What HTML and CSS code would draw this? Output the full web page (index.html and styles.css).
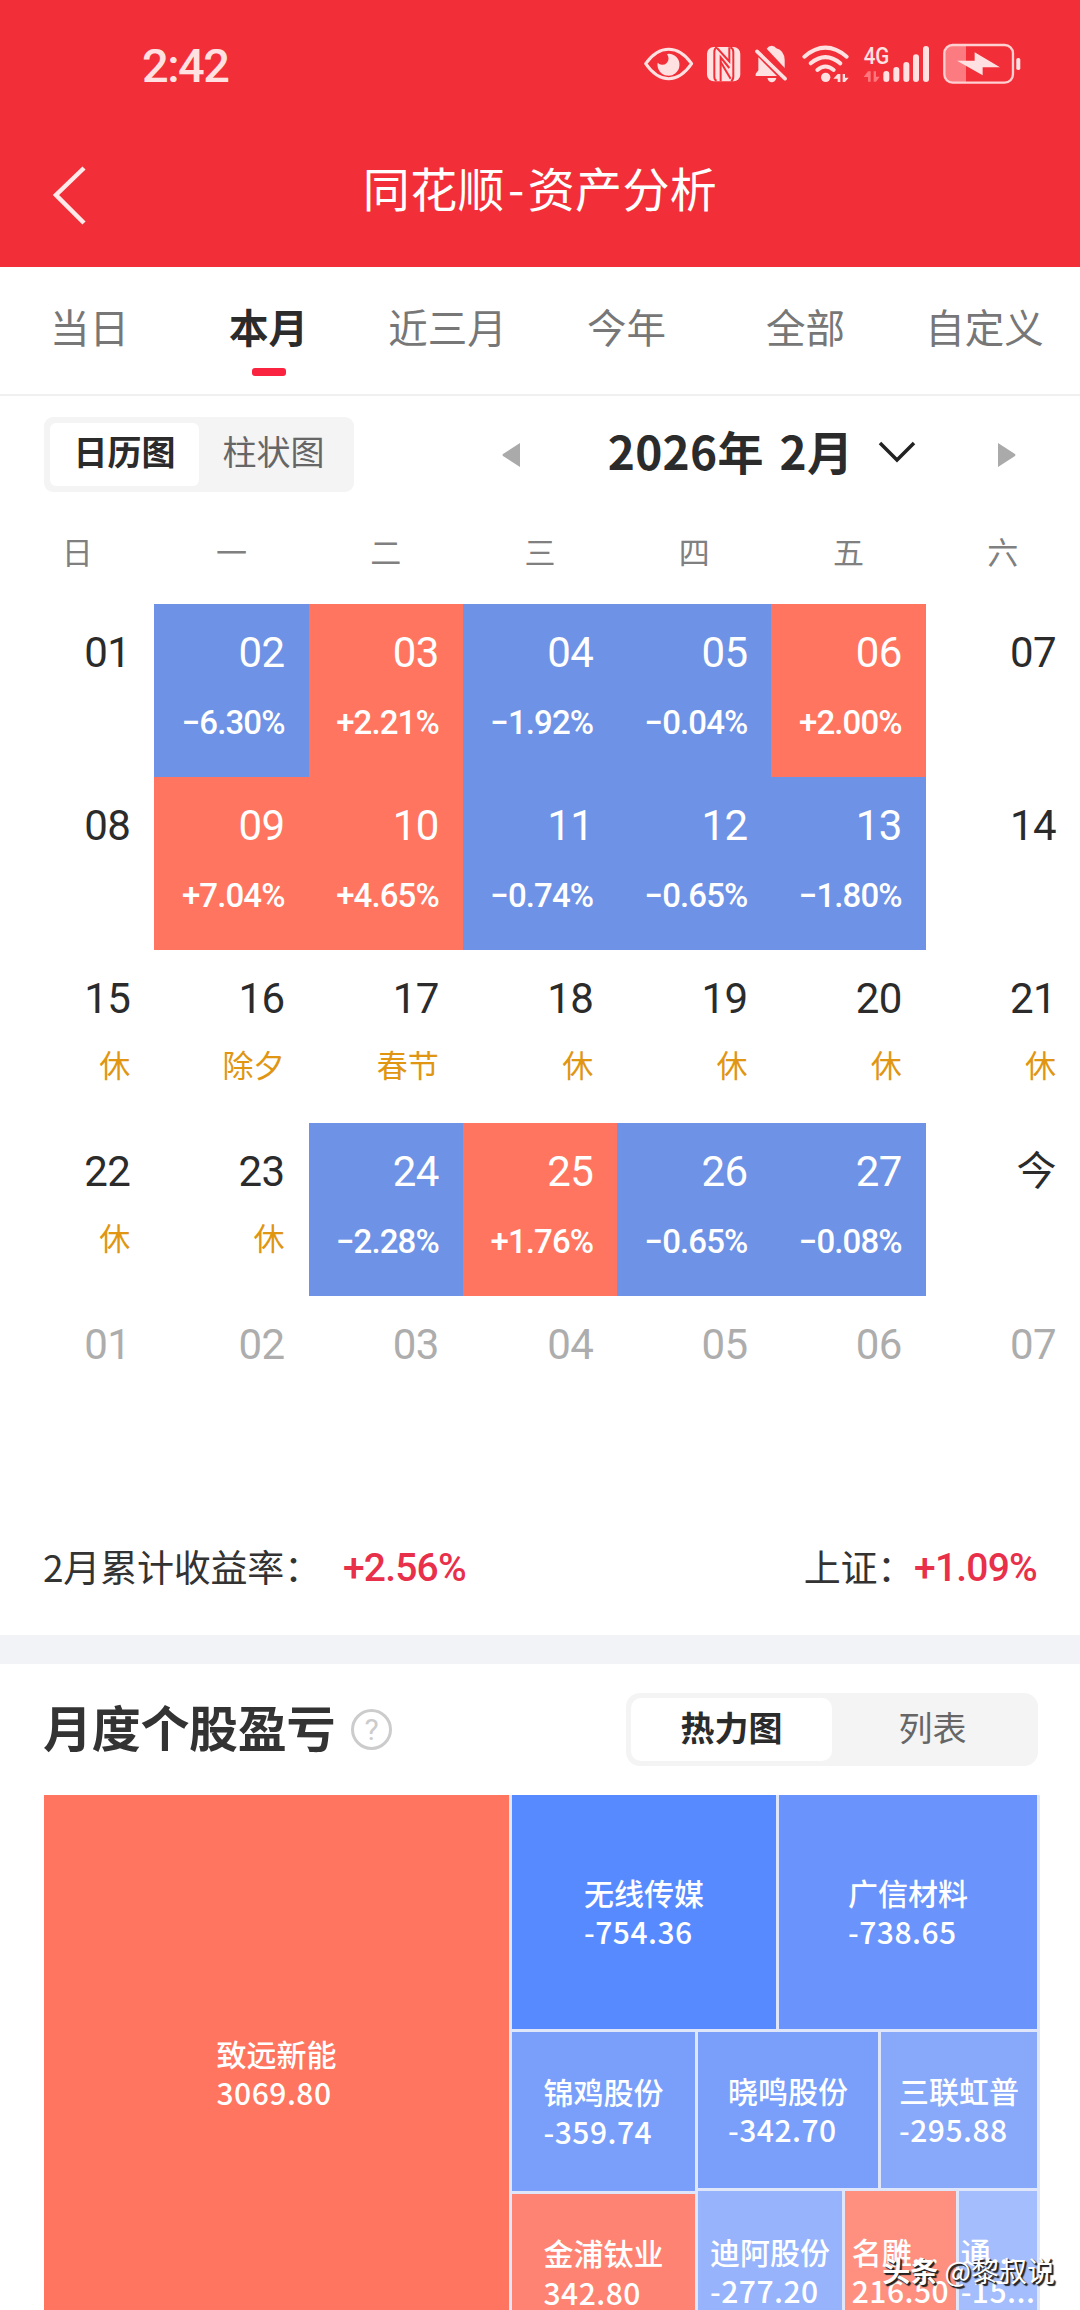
FILE: index.html
```html
<!DOCTYPE html>
<html lang="zh-CN">
  <head>
    <meta charset="UTF-8" />
    <meta name="viewport" content="width=device-width, initial-scale=1.0" />
    <title>同花顺-资产分析</title>
    <link rel="stylesheet" href="styles.css">
  </head>
  <body>
    <header class="header">
      <div class="status-bar">
        <span class="time">2:42</span>
        <div class="status-icons">
          <!-- eye -->
          <svg width="60" height="70" viewBox="60 0 180 210">
            <path d="M77 101 Q108 58 146 58 Q184 58 215 101 Q184 146 146 146 Q108 146 77 101Z" fill="none" stroke="#ffe1e2" stroke-width="9" stroke-linejoin="round" />
            <path d="M146 71 A33 33 0 1 1 113 98 A17 17 0 1 0 141 73Z" fill="#ffe1e2" />
          </svg>
          <!-- nfc -->
          <svg width="48.3" height="70" viewBox="240 0 145 210">
            <rect x="261" y="51" width="100" height="103" rx="20" fill="#ffe1e2" />
            <g fill="none" stroke="#f22f38" stroke-width="6">
              <path d="M290 152 Q283 150 283 140 V66 Q283 55 291 52" />
              <path d="M291 54 L328 94 V52" />
              <path d="M302 154 V82 L328 114" />
              <path d="M302 96 L332 146" />
              <path d="M331 52 Q340 55 340 66 V140 Q340 150 333 153" />
            </g>
          </svg>
          <!-- muted bell -->
          <svg width="46.7" height="70" viewBox="385 0 140 210">
            <path d="M441 56 Q447 47 456 47 Q465 47 470 55 Q494 62 495 90 V114Z" fill="#ffe1e2" />
            <path d="M416 82 L472 138 H408 V131 L416 121Z" fill="#ffe1e2" />
            <path d="M412 64 L496 146" stroke="#ffe1e2" stroke-width="11" stroke-linecap="round" />
            <path d="M443 144 H470 Q466 157 456 157 Q447 157 443 144Z" fill="#ffe1e2" />
          </svg>
          <!-- wifi -->
          <svg width="61.7" height="70" viewBox="525 0 185 210">
            <g fill="none" stroke="#ffe1e2" stroke-width="12" stroke-linecap="round">
              <path d="M553 80 Q616 26 680 80" />
              <path d="M572 100 Q616 63 661 100" />
              <path d="M592 120 Q616 99 641 120" />
            </g>
            <circle cx="617" cy="142" r="14" fill="#ffe1e2" />
            <path d="M640 146 L653 132 H661 V156 H653 V146Z M668 132 H675 V143 H686 L675 156 H668Z" fill="#ffe1e2" />
          </svg>
          <!-- mobile signal -->
          <svg width="80" height="70" viewBox="710 0 240 210">
            <text class="signal-text" x="730" y="101" textLength="77" lengthAdjust="spacingAndGlyphs">4G</text>
            <path d="M730 141 L743 124 H751 V155 H743 V141Z M760 124 H767 V140 H778 L767 155 H760Z" fill="#ff777c" />
            <g stroke="#ffe1e2" stroke-width="18" stroke-linecap="round">
              <path d="M798 132 V147" />
              <path d="M828 120 V147" />
              <path d="M858 105 V147" />
              <path d="M887 82 V147" />
              <path d="M917 57 V147" />
            </g>
          </svg>
          <!-- battery -->
          <svg width="93.3" height="70" viewBox="950 0 280 210">
            <path d="M1037 48 H995 Q974 48 974 72 V132 Q974 156 995 156 H1037Z" fill="#fb7b80" />
            <rect x="972" y="45" width="206" height="113" rx="25" fill="none" stroke="#ffd0d2" stroke-width="7" />
            <rect x="1188" y="84" width="12" height="36" rx="5" fill="#ffe1e2" />
            <path d="M1010 92 L1063 92 V67 L1139 112 L1087 112 V136Z" fill="#ffe1e2" />
          </svg>
        </div>
      </div>
      <div class="nav-bar">
        <svg class="back" width="40" height="64" viewBox="0 0 40 64">
          <path d="M34 5 L6 32 L34 60" fill="none" stroke="#ffe9e9" stroke-width="4.5" />
        </svg>
        <h1 class="nav-title">同花顺<span>-</span>资产分析</h1>
      </div>
    </header>

    <nav class="tabs">
      <span class="tab">当日</span>
      <span class="tab active">本月</span>
      <span class="tab">近三月</span>
      <span class="tab">今年</span>
      <span class="tab">全部</span>
      <span class="tab">自定义</span>
    </nav>

    <section class="toolbar">
      <div class="segment chart-segment">
        <span class="segment-item active">日历图</span>
        <span class="segment-item">柱状图</span>
      </div>
      <div class="month-picker">
        <svg width="20" height="26" viewBox="0 0 20 26">
          <path d="M19 1 V25 L2 14 Q1 13 2 12Z" fill="#aaa" />
        </svg>
        <div class="month">
          <span>2026年 2月</span>
          <svg width="38" height="24" viewBox="0 0 38 24">
            <path d="M2 3 L19 20 L36 3" fill="none" stroke="#222" stroke-width="3.5" />
          </svg>
        </div>
        <svg width="20" height="26" viewBox="0 0 20 26">
          <path d="M1 1 V25 L18 14 Q19 13 18 12Z" fill="#aaa" />
        </svg>
      </div>
    </section>

    <div class="weekdays">
      <span>日</span><span>一</span><span>二</span><span>三</span><span>四</span><span>五</span><span>六</span>
    </div>

    <section class="calendar">
      <div class="day"><b>01</b></div>
      <div class="day down"><b>02</b><span>−6.30%</span></div>
      <div class="day up"><b>03</b><span>+2.21%</span></div>
      <div class="day down"><b>04</b><span>−1.92%</span></div>
      <div class="day down"><b>05</b><span>−0.04%</span></div>
      <div class="day up"><b>06</b><span>+2.00%</span></div>
      <div class="day"><b>07</b></div>

      <div class="day"><b>08</b></div>
      <div class="day up"><b>09</b><span>+7.04%</span></div>
      <div class="day up"><b>10</b><span>+4.65%</span></div>
      <div class="day down"><b>11</b><span>−0.74%</span></div>
      <div class="day down"><b>12</b><span>−0.65%</span></div>
      <div class="day down"><b>13</b><span>−1.80%</span></div>
      <div class="day"><b>14</b></div>

      <div class="day rest"><b>15</b><span>休</span></div>
      <div class="day rest"><b>16</b><span>除夕</span></div>
      <div class="day rest"><b>17</b><span>春节</span></div>
      <div class="day rest"><b>18</b><span>休</span></div>
      <div class="day rest"><b>19</b><span>休</span></div>
      <div class="day rest"><b>20</b><span>休</span></div>
      <div class="day rest"><b>21</b><span>休</span></div>

      <div class="day rest"><b>22</b><span>休</span></div>
      <div class="day rest"><b>23</b><span>休</span></div>
      <div class="day down"><b>24</b><span>−2.28%</span></div>
      <div class="day up"><b>25</b><span>+1.76%</span></div>
      <div class="day down"><b>26</b><span>−0.65%</span></div>
      <div class="day down"><b>27</b><span>−0.08%</span></div>
      <div class="day today"><b>今</b></div>

      <div class="day other"><b>01</b></div>
      <div class="day other"><b>02</b></div>
      <div class="day other"><b>03</b></div>
      <div class="day other"><b>04</b></div>
      <div class="day other"><b>05</b></div>
      <div class="day other"><b>06</b></div>
      <div class="day other"><b>07</b></div>
    </section>

    <section class="summary">
      <div class="summary-item month-rate">
        <span>2月累计收益率：</span>
        <span class="rate">+2.56%</span>
      </div>
      <div class="summary-item index-rate">
        <span>上证：</span>
        <span class="rate">+1.09%</span>
      </div>
    </section>

    <section class="stocks">
      <div class="stocks-head">
        <h2>月度个股盈亏</h2>
        <span class="help">?</span>
        <div class="segment stock-segment">
          <span class="segment-item active">热力图</span>
          <span class="segment-item">列表</span>
        </div>
      </div>

      <div class="treemap">
        <div class="tile tile-main red-1"><p>致远新能<span>3069.80</span></p></div>
        <div class="tree-side">
          <div class="tree-top">
            <div class="tile blue-1"><p>无线传媒<span>-754.36</span></p></div>
            <div class="tile blue-2"><p>广信材料<span>-738.65</span></p></div>
          </div>
          <div class="tree-bottom">
            <div class="tree-left">
              <div class="tile blue-3"><p>锦鸡股份<span>-359.74</span></p></div>
              <div class="tile red-2"><p>金浦钛业<span>342.80</span></p></div>
            </div>
            <div class="tree-right">
              <div class="tree-row row-a">
                <div class="tile blue-3"><p>晓鸣股份<span>-342.70</span></p></div>
                <div class="tile blue-4"><p>三联虹普<span>-295.88</span></p></div>
              </div>
              <div class="tree-row row-b">
                <div class="tile blue-5"><p>迪阿股份<span>-277.20</span></p></div>
                <div class="tile red-3"><p>名雕...<span>216.50</span></p></div>
                <div class="tile blue-6"><p>通...<span>-15...</span></p></div>
              </div>
            </div>
          </div>
        </div>
      </div>
    </section>

    <div class="watermark"><b>头条</b> @黎叔说</div>
  </body>
</html>
```
FILE: styles.css
```css
* {
  box-sizing: border-box;
}
html,
body {
  height: 2310px;
  overflow: hidden;
}
body {
  position: relative;
  width: 1080px;
  margin: 0;
  background-color: #fff;
  color: #333;
  font-family: "Noto Sans CJK SC", sans-serif;
}
h1,
h2,
p {
  margin: 0;
}
svg {
  display: block;
  flex: none;
}

/* header */
.header {
  height: 267px;
  background-color: #f22f38;
}
.status-bar {
  display: flex;
  align-items: center;
  justify-content: space-between;
  height: 130px;
  padding: 0 50px 0 142px;
}
.time {
  color: #ffe1e2;
  font-family: Roboto, sans-serif;
  font-size: 47px;
  font-weight: 500;
  letter-spacing: -1.5px;
}
.status-icons {
  display: flex;
  width: 390px;
}
.signal-text {
  fill: #ffe1e2;
  font-family: Roboto, sans-serif;
  font-size: 70px;
  font-weight: 500;
}
.nav-bar {
  display: grid;
  grid-template-columns: 50px 1fr 50px;
  align-items: center;
  height: 120px;
  padding: 0 50px;
}
.back {
  margin-top: 10px;
}
.nav-title {
  padding-bottom: 8px;
  color: #fff;
  font-size: 47px;
  font-weight: 400;
  letter-spacing: 0.4px;
  text-align: center;
}
.nav-title span {
  margin: 0 3px;
}

/* tabs */
.tabs {
  display: flex;
  height: 129px;
  border-bottom: 2px solid #f0f0f0;
}
.tab {
  display: flex;
  flex-direction: column;
  align-items: center;
  width: 179px;
  padding-top: 30px;
  color: #777;
  font-size: 39.5px;
  line-height: 58px;
}
.tab.active {
  color: #2b2b2b;
  font-weight: 700;
}
.tab.active::after {
  content: "";
  width: 34px;
  height: 8px;
  margin-top: 13px;
  border-radius: 3px;
  background-color: #fb2440;
}

/* chart switch and month */
.toolbar {
  display: flex;
  align-items: center;
  gap: 147px;
  height: 117px;
  padding: 0 63px 0 44px;
}
.segment {
  display: flex;
  padding: 6px;
  background-color: #f4f4f4;
  color: #666;
  font-size: 34px;
}
.segment-item {
  display: flex;
  flex: 1;
  align-items: center;
  justify-content: center;
}
.segment-item.active {
  background-color: #fff;
  color: #2b2b2b;
  font-weight: 700;
}
.chart-segment {
  width: 310px;
  height: 75px;
  border-radius: 9px;
}
.chart-segment .segment-item {
  padding-bottom: 8px;
}
.chart-segment .active {
  border-radius: 6px;
}
.month-picker {
  display: flex;
  flex: 1;
  align-items: center;
  justify-content: space-between;
}
.month {
  display: flex;
  align-items: center;
  gap: 25px;
  margin-left: 6px;
  color: #2b2b2b;
  font-size: 46px;
  font-weight: 700;
  line-height: 60px;
}
.month span {
  padding-bottom: 10px;
  letter-spacing: 0.3px;
  word-spacing: 5px;
}
.month svg {
  margin-bottom: 5px;
}

/* calendar */
.weekdays {
  display: grid;
  grid-template-columns: repeat(7, 1fr);
  height: 91px;
  color: #808080;
  font-size: 31px;
  line-height: 75px;
  text-align: center;
}
.calendar {
  display: grid;
  grid-template-columns: repeat(7, 1fr);
  grid-auto-rows: 173px;
}
.day {
  display: flex;
  flex-direction: column;
  align-items: flex-end;
  padding: 19px 24px 0 0;
  font-family: Roboto, "Noto Sans CJK SC", sans-serif;
}
.day b {
  color: #2b2b2b;
  font-size: 42px;
  font-weight: 400;
  letter-spacing: -0.6px;
  line-height: 60px;
}
.day span {
  margin-top: 10px;
  font-size: 33px;
  font-weight: 500;
  letter-spacing: -0.9px;
  line-height: 60px;
}
.up {
  background-color: #ff755f;
}
.down {
  background-color: #6e92e5;
}
.up b,
.down b,
.up span,
.down span {
  color: #fff;
}
.rest span {
  margin-top: 8px;
  color: #e09612;
  font-size: 31px;
  font-weight: 400;
  letter-spacing: 0;
}
.day.today b {
  font-size: 40px;
}
.day.other b {
  color: #adadad;
}

/* month summary */
.summary {
  display: flex;
  justify-content: space-between;
  height: 224px;
  margin-top: -29px;
  padding: 96px 43px 0 43px;
  border-bottom: 29px solid #f1f3f7;
}
.summary-item {
  display: flex;
  align-items: center;
  height: 60px;
  font-size: 37px;
  letter-spacing: -0.2px;
  white-space: nowrap;
}
.rate {
  padding-top: 3px;
  color: #e8304a;
  font-family: Roboto, sans-serif;
  font-size: 39px;
  font-weight: 500;
  letter-spacing: -0.8px;
}
.month-rate .rate {
  margin-left: 22px;
}

/* stocks */
.stocks {
  padding: 0 40px 0 44px;
}
.stocks-head {
  display: flex;
  align-items: center;
  height: 131px;
}
.stocks-head h2 {
  margin-left: -1px;
  padding-bottom: 9px;
  font-size: 49px;
  font-weight: 700;
  letter-spacing: -0.3px;
}
.help {
  display: flex;
  align-items: center;
  justify-content: center;
  width: 41px;
  height: 41px;
  margin-left: 16px;
  border: 3px solid #ccc;
  border-radius: 50%;
  color: #ccc;
  font-family: Roboto, sans-serif;
  font-size: 30px;
}
.stock-segment {
  width: 412px;
  height: 73px;
  margin-left: auto;
  margin-right: 2px;
  padding: 5px;
  border-radius: 14px;
}
.stock-segment .segment-item {
  padding-bottom: 7px;
}
.stock-segment .active {
  border-radius: 10px;
}

/* heat map */
.treemap {
  display: flex;
  gap: 3px;
  height: 556px;
  padding-right: 3px;
  background-color: #dfe6fa;
}
.tile {
  display: flex;
  flex: 1;
  align-items: center;
  justify-content: center;
  overflow: hidden;
  color: #fff;
  font-size: 30px;
  font-weight: 500;
  line-height: 39.5px;
  white-space: nowrap;
}
.tile p span {
  display: block;
  letter-spacing: 0.5px;
}
.tile-main {
  flex: none;
  width: 465px;
}
.tree-side {
  display: flex;
  flex: 1;
  flex-direction: column;
  gap: 3px;
}
.tree-top {
  display: grid;
  grid-template-columns: 264px 258px;
  gap: 3px;
  height: 234px;
}
.tree-bottom {
  display: grid;
  grid-template-columns: 183px 339px;
  gap: 3px;
  flex: 1;
}
.tree-left {
  display: grid;
  grid-template-rows: 159px 1fr;
  gap: 3px;
}
.tree-right {
  display: grid;
  grid-template-rows: 156px 1fr;
  gap: 3px;
}
.tree-row {
  display: grid;
  gap: 3px;
}
.row-a {
  grid-template-columns: 180px 156px;
}
.row-b {
  grid-template-columns: 144px 111px 78px;
}
.red-1 {
  background-color: #ff755f;
}
.red-2 {
  background-color: #ff8372;
}
.red-3 {
  background-color: #ff9080;
}
.blue-1 {
  background-color: #578aff;
}
.blue-2 {
  background-color: #6a93fb;
}
.blue-3 {
  background-color: #799ffa;
}
.blue-4 {
  background-color: #88a9fa;
}
.blue-5 {
  background-color: #96b3fc;
}
.blue-6 {
  background-color: #a4bdfd;
}

.watermark {
  position: absolute;
  right: 25px;
  bottom: 20px;
  color: #fff;
  font-size: 28px;
  line-height: 40px;
  text-shadow: 2px 2px 1px #222, 1px 1px 1px #222;
}
```
